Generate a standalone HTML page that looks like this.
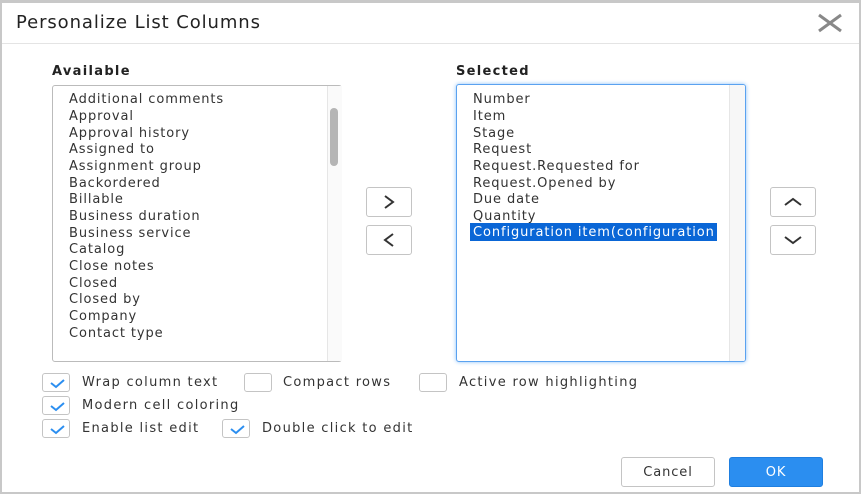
<!DOCTYPE html>
<html><head><style>
*{margin:0;padding:0;box-sizing:border-box}
body{width:862px;height:495px;background:#fff;position:relative;overflow:hidden;font-family:"DejaVu Sans","Liberation Sans",sans-serif;color:#333;font-size:13px;letter-spacing:0.9px}
.frame{position:absolute;left:0;top:0;width:861px;height:494px;border:2px solid #c8c8c8;border-top:3px solid #c8c8c8}
.abs{position:absolute}
.title{left:16px;top:12px;font-size:18px;letter-spacing:0.9px;color:#222}
.hr{left:2px;top:43px;width:857px;height:1px;background:#e4e4e4}
.lbl{font-weight:bold;font-size:13px;color:#222;letter-spacing:1.3px}
.box{border:1px solid #bbb;border-radius:3px;background:#fff}
.item{position:absolute;left:16px;white-space:nowrap;line-height:17px}
.btn{border:1px solid #c4c4c4;border-radius:3px;background:#fff;width:46px;height:30px}
.cb{width:28px;height:19px;border:1px solid #c4c4c4;border-radius:3px;background:#fff}
.cbl{font-size:13px;color:#333;letter-spacing:1.3px}
</style></head><body>
<div class="frame"></div>
<div class="abs title">Personalize List Columns</div>
<svg class="abs" style="left:816px;top:13px" width="28" height="20"><path d="M3 2 L25 18 M25 2 L3 18" stroke="#888" stroke-width="3"/></svg>
<div class="abs hr"></div>
<div class="abs lbl" style="left:52px;top:64px">Available</div>
<div class="abs lbl" style="left:456px;top:64px">Selected</div>

<div class="abs box" style="left:52px;top:85px;width:290px;height:277px">
 <div class="abs" style="left:274px;top:0;width:15px;height:275px;border-left:1px solid #e6e6e6;background:#fafafa"></div>
 <div class="abs" style="left:277px;top:22px;width:8px;height:58px;background:#b5b5b5;border-radius:4px"></div>
 <div class="item" style="top:5px">Additional comments</div>
 <div class="item" style="top:22px">Approval</div>
 <div class="item" style="top:39px">Approval history</div>
 <div class="item" style="top:55px">Assigned to</div>
 <div class="item" style="top:72px">Assignment group</div>
 <div class="item" style="top:89px">Backordered</div>
 <div class="item" style="top:105px">Billable</div>
 <div class="item" style="top:122px">Business duration</div>
 <div class="item" style="top:139px">Business service</div>
 <div class="item" style="top:155px">Catalog</div>
 <div class="item" style="top:172px">Close notes</div>
 <div class="item" style="top:189px">Closed</div>
 <div class="item" style="top:205px">Closed by</div>
 <div class="item" style="top:222px">Company</div>
 <div class="item" style="top:239px">Contact type</div>
</div>

<div class="abs box" style="left:456px;top:84px;width:290px;height:278px;border:1px solid #5aa2f0;box-shadow:0 0 4px #8cc0f8;overflow:hidden">
 <div class="abs" style="left:272px;top:0;width:16px;height:276px;border-left:1px solid #e6e6e6;background:#f7f7f7"></div>
 <div class="item" style="top:6px">Number</div>
 <div class="item" style="top:23px">Item</div>
 <div class="item" style="top:40px">Stage</div>
 <div class="item" style="top:56px">Request</div>
 <div class="item" style="top:73px">Request.Requested for</div>
 <div class="item" style="top:90px">Request.Opened by</div>
 <div class="item" style="top:106px">Due date</div>
 <div class="item" style="top:123px">Quantity</div>
 <div class="abs" style="left:13px;top:138px;width:247px;height:18px;background:#0a66d6;color:#fff;overflow:hidden;white-space:nowrap;line-height:19px;padding-left:3px">Configuration item(configuration</div>
</div>

<div class="abs btn" style="left:366px;top:187px"><svg width="44" height="28"><path d="M18 8 L26 14 L18 20" fill="none" stroke="#333" stroke-width="2"/></svg></div>
<div class="abs btn" style="left:366px;top:225px"><svg width="44" height="28"><path d="M26 8 L18 14 L26 20" fill="none" stroke="#333" stroke-width="2"/></svg></div>
<div class="abs btn" style="left:770px;top:187px"><svg width="44" height="28"><path d="M14 17 L22 11 L30 17" fill="none" stroke="#333" stroke-width="2"/></svg></div>
<div class="abs btn" style="left:770px;top:225px"><svg width="44" height="28"><path d="M14 11 L22 17 L30 11" fill="none" stroke="#333" stroke-width="2"/></svg></div>

<svg width="0" height="0" style="position:absolute"><defs><path id="ck" d="M8 9 L13 13 L21 6" fill="none" stroke="#2b8ef0" stroke-width="2"/></defs></svg>
<div class="abs cb" style="left:42px;top:373px"><svg width="26" height="17"><use href="#ck"/></svg></div>
<div class="abs cbl" style="left:82px;top:375px">Wrap column text</div>
<div class="abs cb" style="left:244px;top:373px"></div>
<div class="abs cbl" style="left:283px;top:375px">Compact rows</div>
<div class="abs cb" style="left:419px;top:373px"></div>
<div class="abs cbl" style="left:459px;top:375px">Active row highlighting</div>
<div class="abs cb" style="left:42px;top:396px"><svg width="26" height="17"><use href="#ck"/></svg></div>
<div class="abs cbl" style="left:82px;top:398px">Modern cell coloring</div>
<div class="abs cb" style="left:42px;top:419px"><svg width="26" height="17"><use href="#ck"/></svg></div>
<div class="abs cbl" style="left:82px;top:421px">Enable list edit</div>
<div class="abs cb" style="left:222px;top:419px"><svg width="26" height="17"><use href="#ck"/></svg></div>
<div class="abs cbl" style="left:262px;top:421px">Double click to edit</div>

<div class="abs" style="left:621px;top:457px;width:94px;height:30px;border:1px solid #c4c4c4;border-radius:3px;text-align:center;line-height:30px;color:#333">Cancel</div>
<div class="abs" style="left:729px;top:457px;width:94px;height:30px;background:#2b8ef0;border:1px solid #1f7fe0;border-radius:3px;text-align:center;line-height:30px;color:#fff">OK</div>
</body></html>
